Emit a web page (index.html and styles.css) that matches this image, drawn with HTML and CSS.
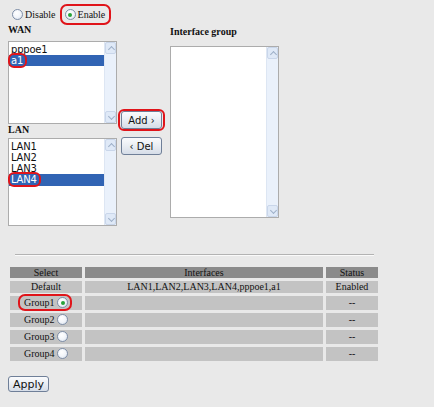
FILE: index.html
```html
<!DOCTYPE html>
<html>
<head>
<meta charset="utf-8">
<link rel="stylesheet" href="styles.css">
</head>
<body>
<div class="page">
  <div class="modes">
    <label class="opt"><span class="radio"></span>Disable</label>
    <label class="opt mark"><span class="radio on"></span>Enable</label>
  </div>

  <div class="lists">
    <div class="col">
      <div class="lbl">WAN</div>
      <div class="listbox wan">
        <div class="items">
          <div class="item">pppoe1</div>
          <div class="item sel"><span class="mark tight">a1</span></div>
        </div>
        <div class="sbar"><span class="arrow up"></span><span class="arrow down"></span></div>
      </div>
      <div class="lbl lan-lbl">LAN</div>
      <div class="listbox lan">
        <div class="items">
          <div class="item">LAN1</div>
          <div class="item">LAN2</div>
          <div class="item">LAN3</div>
          <div class="item sel"><span class="mark tight">LAN4</span></div>
        </div>
        <div class="sbar"><span class="arrow up"></span><span class="arrow down"></span></div>
      </div>
    </div>

    <div class="btns">
      <button class="btn mark">Add &rsaquo;</button>
      <button class="btn">&lsaquo; Del</button>
    </div>

    <div class="col right">
      <div class="lbl">Interface group</div>
      <div class="listbox grp">
        <div class="items"></div>
        <div class="sbar"><span class="arrow up"></span><span class="arrow down"></span></div>
      </div>
    </div>
  </div>

  <div class="rule"></div>

  <table class="tbl">
    <tr class="head">
      <th class="c1">Select</th>
      <th class="c2">Interfaces</th>
      <th class="c3">Status</th>
    </tr>
    <tr class="row">
      <td>Default</td>
      <td>LAN1,LAN2,LAN3,LAN4,pppoe1,a1</td>
      <td>Enabled</td>
    </tr>
    <tr class="row g">
      <td><span class="mark grp1">Group1 <span class="radio on"></span></span></td>
      <td></td>
      <td>--</td>
    </tr>
    <tr class="row g">
      <td>Group2 <span class="radio"></span></td>
      <td></td>
      <td>--</td>
    </tr>
    <tr class="row g">
      <td>Group3 <span class="radio"></span></td>
      <td></td>
      <td>--</td>
    </tr>
    <tr class="row g">
      <td>Group4 <span class="radio"></span></td>
      <td></td>
      <td>--</td>
    </tr>
  </table>

  <button class="btn apply">Apply</button>
</div>
</body>
</html>
```

FILE: styles.css
```css
* { box-sizing: border-box; }
html, body { margin: 0; padding: 0; }
body {
  background: #e9e9e9;
  width: 434px;
  height: 407px;
  overflow: hidden;
  font-family: "Liberation Serif", "DejaVu Serif", serif;
  font-size: 10px;
  color: #111;
}
.page { padding: 0 0 0 8px; }

.modes {
  display: flex;
  align-items: center;
  gap: 9px;
  padding: 7px 0 0 4px;
  height: 22px;
}
.opt {
  display: flex;
  align-items: center;
  gap: 2px;
  font-size: 10px;
  position: relative;
}
.radio {
  display: inline-block;
  width: 11px;
  height: 11px;
  border-radius: 50%;
  border: 1px solid #7f8fa8;
  background: radial-gradient(circle at 40% 35%, #ffffff 0%, #f2f5fa 50%, #d3dcea 100%);
  vertical-align: middle;
  position: relative;
}
.radio.on::after {
  content: "";
  position: absolute;
  left: 2.5px;
  top: 2.5px;
  width: 4px;
  height: 4px;
  border-radius: 50%;
  background: #27a33a;
}

.mark { position: relative; }
.mark::before {
  content: "";
  position: absolute;
  left: -5px; right: -5px; top: -5px; bottom: -5px;
  border: 2px solid #e0141a;
  border-radius: 7px;
  pointer-events: none;
}
.opt.mark::before { left: -5px; right: -6px; top: -5px; bottom: -5px; }
.tight::before { left: -3px; right: -4px; top: -2px; bottom: -2px; border-radius: 6px; }

.lists {
  display: flex;
  align-items: flex-start;
}
.col { width: 109px; }
.lbl {
  font-weight: bold;
  font-size: 10px;
  height: 11px;
  line-height: 11px;
  margin-top: 2px;
}
.listbox {
  display: flex;
  background: #fff;
  border: 1px solid #acacac;
  width: 109px;
  margin-top: 6px;
}
.wan { height: 83px; }
.lan { height: 88px; margin-top: 3px; }
.lan-lbl { margin-top: 0; }
.grp { height: 172px; margin-top: 9px; }
.items {
  flex: 1;
  padding-top: 2px;
  font-family: "DejaVu Sans", "Liberation Sans", sans-serif;
  font-size: 10px;
  letter-spacing: -0.2px;
}
.item {
  height: 11px;
  line-height: 11px;
  padding-left: 2px;
  color: #111;
}
.item.sel {
  background: #3164b4;
  color: #fff;
}
.lan .item.sel { height: 12px; line-height: 12px; }
.sbar {
  width: 12px;
  background: #eaf1fb;
  border-left: 1px solid #dde6f3;
  display: flex;
  flex-direction: column;
  justify-content: space-between;
}
.arrow {
  display: block;
  height: 12px;
  background: #dfe9f7;
  border: 1px solid #c9d6ea;
  border-radius: 2px;
  position: relative;
}
.arrow::after {
  content: "";
  position: absolute;
  left: 3px;
  width: 4px;
  height: 4px;
  border-left: 1px solid #9fb0c8;
  border-top: 1px solid #9fb0c8;
}
.arrow.up::after { top: 4px; transform: rotate(45deg); }
.arrow.down::after { top: 2px; transform: rotate(225deg); }

.btns {
  display: flex;
  flex-direction: column;
  gap: 8px;
  margin: 89px 0 0 4px;
  width: 41px;
}
.btn {
  font-family: "DejaVu Sans", "Liberation Sans", sans-serif;
  font-size: 10px;
  color: #111;
  height: 18px;
  width: 41px;
  padding: 0;
  border: 1px solid #6f7f98;
  border-radius: 3px;
  background: linear-gradient(#fafbfd, #e9edf3 50%, #d6dde8);
}
.btn.mark::before { left: -4px; right: -4px; top: -3px; bottom: -3px; border-radius: 6px; }
.right { margin-left: 8px; }
.right .lbl { margin-top: 4px; }

.rule {
  margin: 28px 0 0 7px;
  width: 359px;
  height: 2px;
  border-top: 1px solid #b3b3b3;
  border-bottom: 1px solid #fafafa;
}

.tbl {
  margin: 8px 0 0 -1px;
  border-collapse: separate;
  border-spacing: 3px;
  width: 374px;
}
.tbl th, .tbl td {
  padding: 0;
  text-align: center;
  font-weight: normal;
  font-size: 10px;
}
.head th {
  background: #8b8b8b;
  height: 11px;
  line-height: 11px;
}
.c1 { width: 72px; }
.c3 { width: 52px; }
.row td {
  background: #c3c3c3;
  height: 12px;
  line-height: 12px;
}
.row.g td { height: 14px; }
.row.g .radio { margin-top: -2px; }
.grp1::before { left: -6px; right: -4px; top: -3px; bottom: -3px; border-radius: 7px; }

.apply {
  display: block;
  margin-top: 12px;
  width: 41px;
  height: 16px;
  font-size: 11px;
}
```
